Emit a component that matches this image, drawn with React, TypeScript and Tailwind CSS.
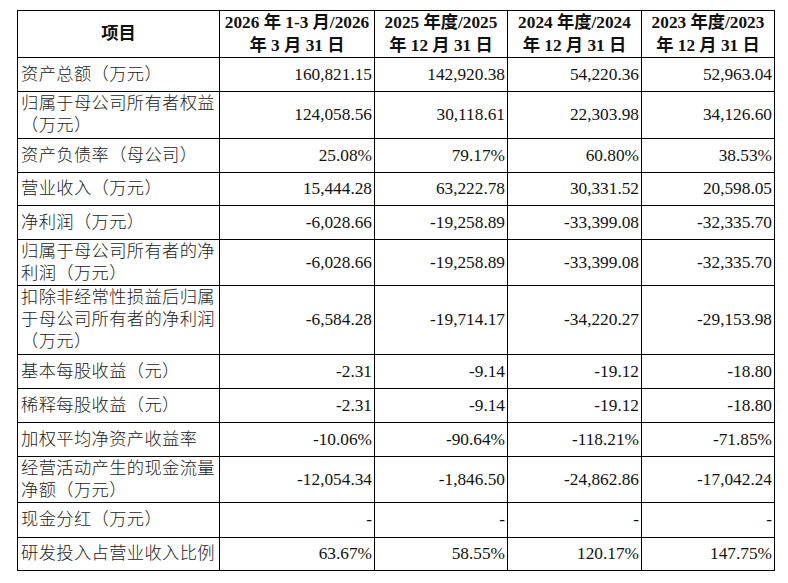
import React from "react";

type Row = {
  label: string[];
  values: string[];
  h: string;
};

const rows: Row[] = [
  { label: ["资产总额（万元）"], values: ["160,821.15", "142,920.38", "54,220.36", "52,963.04"], h: "h-[34px]" },
  { label: ["归属于母公司所有者权益", "（万元）"], values: ["124,058.56", "30,118.61", "22,303.98", "34,126.60"], h: "h-[47px]" },
  { label: ["资产负债率（母公司）"], values: ["25.08%", "79.17%", "60.80%", "38.53%"], h: "h-[34px]" },
  { label: ["营业收入（万元）"], values: ["15,444.28", "63,222.78", "30,331.52", "20,598.05"], h: "h-[33px]" },
  { label: ["净利润（万元）"], values: ["-6,028.66", "-19,258.89", "-33,399.08", "-32,335.70"], h: "h-[34px]" },
  { label: ["归属于母公司所有者的净", "利润（万元）"], values: ["-6,028.66", "-19,258.89", "-33,399.08", "-32,335.70"], h: "h-[46px]" },
  { label: ["扣除非经常性损益后归属", "于母公司所有者的净利润", "（万元）"], values: ["-6,584.28", "-19,714.17", "-34,220.27", "-29,153.98"], h: "h-[69px]" },
  { label: ["基本每股收益（元）"], values: ["-2.31", "-9.14", "-19.12", "-18.80"], h: "h-[34px]" },
  { label: ["稀释每股收益（元）"], values: ["-2.31", "-9.14", "-19.12", "-18.80"], h: "h-[34px]" },
  { label: ["加权平均净资产收益率"], values: ["-10.06%", "-90.64%", "-118.21%", "-71.85%"], h: "h-[34px]" },
  { label: ["经营活动产生的现金流量", "净额（万元）"], values: ["-12,054.34", "-1,846.50", "-24,862.86", "-17,042.24"], h: "h-[46px]" },
  { label: ["现金分红（万元）"], values: ["-", "-", "-", "-"], h: "h-[35px]" },
  { label: ["研发投入占营业收入比例"], values: ["63.67%", "58.55%", "120.17%", "147.75%"], h: "h-[33px]" },
];

const headers: string[][] = [
  ["2026 年 1-3 月/2026", "年 3 月 31 日"],
  ["2025 年度/2025", "年 12 月 31 日"],
  ["2024 年度/2024", "年 12 月 31 日"],
  ["2023 年度/2023", "年 12 月 31 日"],
];

const cell = "border-r border-b border-black flex items-center";

export default function App() {
  return (
    <div className="w-[788px] h-[583px] bg-white pt-[10px] pl-[17px] text-[#111] font-['Liberation_Serif','Noto_Sans_CJK_SC',serif] text-[17.3px] leading-[22px]">
      <div className="grid grid-cols-[202px_155px_133px_134px_133px] w-[758px] border-t border-l border-black">
        {/* header */}
        <div className={`${cell} h-[47px] justify-center font-bold`}>项目</div>
        {headers.map((hd, i) => (
          <div key={i} className={`${cell} h-[47px] flex-col justify-center font-bold leading-[23px] text-center whitespace-nowrap`}>
            <span>{hd[0]}</span>
            <span>{hd[1]}</span>
          </div>
        ))}

        {/* body */}
        {rows.map((r, ri) => (
          <React.Fragment key={ri}>
            <div className={`${cell} ${r.h} pl-[3px] tracking-[0.35px] font-light text-[#222] whitespace-nowrap`}>
              <div className="flex flex-col">
                {r.label.map((l, li) => (
                  <span key={li}>{l}</span>
                ))}
              </div>
            </div>
            {r.values.map((v, vi) => (
              <div key={vi} className={`${cell} ${r.h} justify-end pr-[2px]`}>
                {v}
              </div>
            ))}
          </React.Fragment>
        ))}
      </div>
    </div>
  );
}
